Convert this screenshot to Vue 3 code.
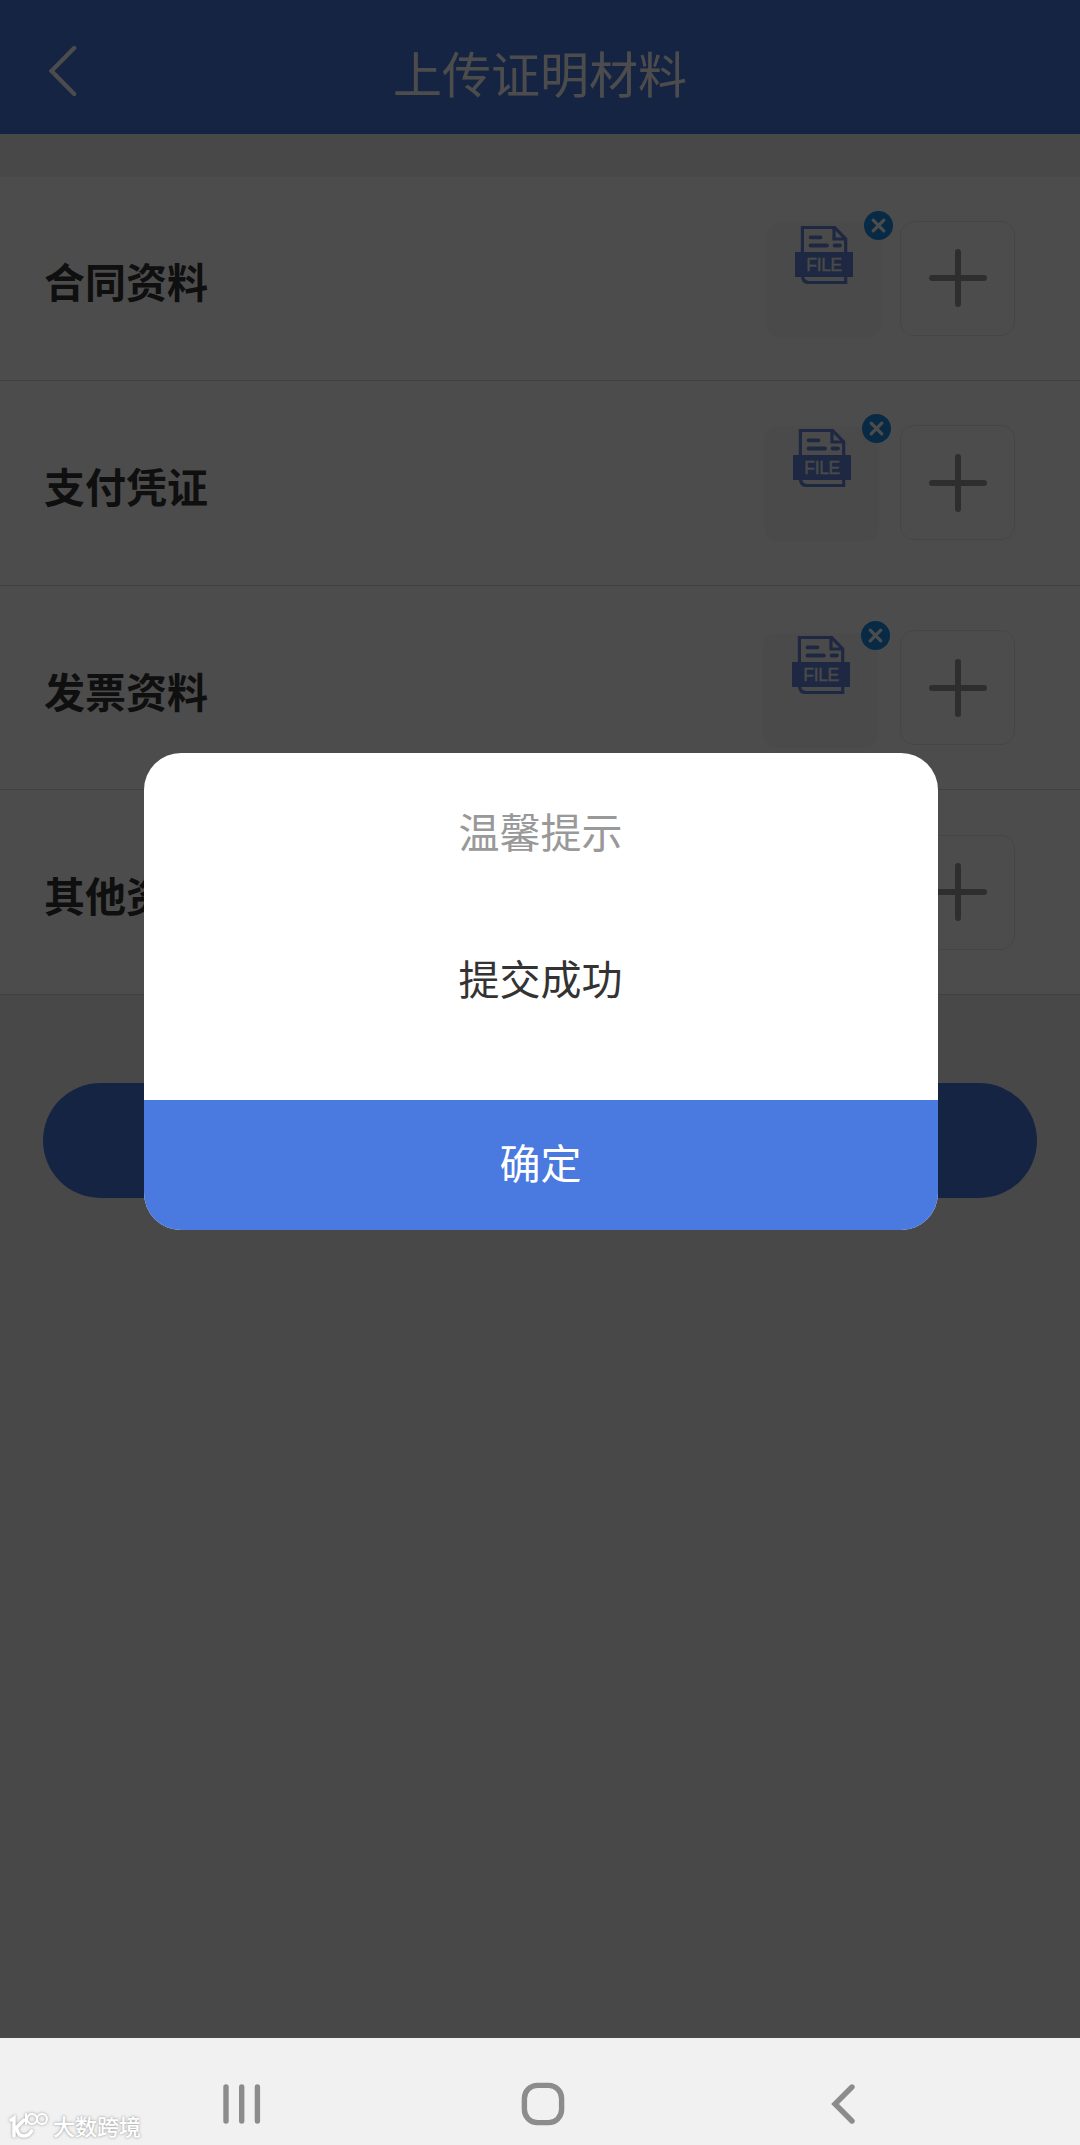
<template>
  <div class="phone">
    <div class="app">
      <header class="barre">
        <svg class="retour" viewBox="0 0 28 50" width="28" height="50">
          <path d="M25.2 2 L2.5 25 L25.2 48" />
        </svg>
        <h1 class="titre">上传证明材料</h1>
      </header>

      <main class="liste">
        <div v-for="item in materiaux" :key="item.nom" class="ligne">
          <span class="nom">{{ item.nom }}</span>
          <div class="fichiers">
            <div v-if="item.fichier" class="fichier" :class="item.classe">
              <svg class="doc" viewBox="0 0 58 58" width="58" height="58">
                <path class="trait" d="M7.4 27 V1.4 H39.5 L50.7 12.8 V27" />
                <path class="trait" d="M39 1 V13 H51" />
                <path class="trait" d="M7.4 50 Q8 56.6 14 56.6 H50.7 V50" />
                <path class="texte" d="M15.5 11.3 H25.5 M15.5 19.5 H32 M39.5 19.5 H45" />
                <rect class="bande" x="0" y="26" width="58" height="25" />
                <text x="29.3" y="44.7" text-anchor="middle" textLength="36">FILE</text>
              </svg>
              <button class="supprimer" @click="supprimer(item)">
                <svg viewBox="0 0 29 29" width="29" height="29">
                  <path d="M9.2 9.2 L19.8 19.8 M19.8 9.2 L9.2 19.8" />
                </svg>
              </button>
            </div>
            <div class="ajouter">
              <svg viewBox="0 0 58 58" width="58" height="58">
                <path d="M29 3 V55 M3 29 H55" />
              </svg>
            </div>
          </div>
        </div>
      </main>

      <button class="envoyer"></button>
    </div>

    <!-- fenêtre de confirmation -->
    <div v-if="ouvert" class="voile">
      <div class="modale">
        <p class="entete">温馨提示</p>
        <p class="message">提交成功</p>
        <button class="ok" @click="ouvert = false">确定</button>
      </div>
    </div>

    <footer class="nav">
      <svg class="recents" viewBox="0 0 38 40" width="38" height="40">
        <path d="M3 3 V37 M18.7 3 V37 M34.4 3 V37" />
      </svg>
      <svg class="accueil" viewBox="0 0 44 44" width="44" height="44">
        <rect x="3.4" y="3.4" width="37.2" height="37.2" rx="13" />
      </svg>
      <svg class="precedent" viewBox="0 0 24 40" width="24" height="40">
        <path d="M21 3 L4 20 L21 37" />
      </svg>
      <div class="filigrane">
        <svg viewBox="0 0 40 28" width="40" height="28">
          <path class="gras" d="M2 9 L5 7 V25 M15 9 L7 17 M8 18 Q9 25 15 25 Q20 25 22.5 20" />
          <path d="M17 3 V13 M38 8 A5 5 0 1 1 28 8 A5 5 0 1 1 38 8 M28 8 A5 5 0 1 1 18 8 A5 5 0 1 1 28 8" />
        </svg>
        <span>大数跨境</span>
      </div>
    </footer>
  </div>
</template>

<script setup>
import { ref } from "vue";

const ouvert = ref(true)

const materiaux = ref([
  { nom: "合同资料", fichier: true, classe: "contrat" },
  { nom: "支付凭证", fichier: true, classe: "paiement" },
  { nom: "发票资料", fichier: true, classe: "facture" },
  { nom: "其他资料", fichier: false, classe: "" },
])

function supprimer(item) {
  item.fichier = false
}
</script>

<style>
body {
  margin: 0;
}
</style>

<style scoped>
.phone {
  position: relative;
  display: flex;
  flex-direction: column;
  width: 1080px;
  height: 2145px;
  overflow: hidden;
  font-family: "Noto Sans CJK SC", sans-serif;
}

svg {
  display: block;
  fill: none;
  stroke-linecap: round;
}

button {
  border: 0;
  padding: 0;
  font-family: inherit;
}

.app {
  flex: 1;
  background-color: #f0f0f0;
}

.barre {
  display: grid;
  grid-template-columns: 90px 1fr 90px;
  align-items: center;
  height: 134px;
  background-color: #4a79e0;
}

.retour {
  margin-left: 49px;
  margin-top: 7px;
  stroke: #fff;
  stroke-width: 4.2;
}

.titre {
  margin: 10px 0 0;
  font-size: 49px;
  font-weight: 400;
  line-height: 60px;
  text-align: center;
  color: #fff;
}

.liste {
  margin-top: 42.6px;
}

.ligne {
  display: flex;
  justify-content: space-between;
  align-items: center;
  box-sizing: border-box;
  height: 204.6px;
  padding: 0 65px 0 44px;
  background-color: #fff;
  border-bottom: 1px solid #d8d8d8;
}

.nom {
  padding-top: 4px;
  font-size: 41px;
  font-weight: 700;
  line-height: 60px;
  color: #333;
}

.fichiers {
  display: flex;
}

.fichier {
  position: relative;
  width: 115px;
  height: 115px;
  border-radius: 14px;
  background-color: #f8f8f8;
}

.contrat {
  margin: 2px 19px -2px 0;
}

.paiement {
  margin: 1px 21px -1px 0;
}

.facture {
  margin: 3px 22px -3px 0;
}

.doc {
  margin: 3px 0 0 29px;
}

.doc .trait {
  stroke: #6485dc;
  stroke-width: 3.2;
  stroke-linecap: butt;
}

.doc .texte {
  stroke: #6485dc;
  stroke-width: 3.8;
}

.doc .bande {
  fill: #6485dc;
}

.doc text {
  font-family: "Liberation Sans", sans-serif;
  font-size: 17.5px;
  fill: #f4f4f4;
  stroke: #f4f4f4;
  stroke-width: 0.4;
}

.supprimer {
  position: absolute;
  top: -12px;
  right: -12px;
  width: 29px;
  height: 29px;
  border-radius: 50%;
  background-color: #1c8ee6;
}

.supprimer svg {
  stroke: #fff;
  stroke-width: 3.2;
}

.ajouter {
  display: flex;
  justify-content: center;
  align-items: center;
  box-sizing: border-box;
  width: 115px;
  height: 115px;
  border: 1px solid #e8e8e8;
  border-radius: 14px;
}

.ajouter svg {
  stroke: #999;
  stroke-width: 6;
}

.envoyer {
  display: block;
  width: 994px;
  height: 115px;
  margin: 88px auto 0;
  border-radius: 58px;
  background-color: #4a79e0;
}

.voile {
  position: absolute;
  top: 0;
  left: 0;
  right: 0;
  bottom: 107px;
  display: flex;
  justify-content: center;
  align-items: flex-start;
  background-color: rgba(0, 0, 0, 0.7);
}

.modale {
  display: flex;
  flex-direction: column;
  width: 794px;
  height: 477px;
  margin-top: 753px;
  margin-left: 1px;
  border-radius: 37px;
  overflow: hidden;
  background-color: #fff;
  font-size: 41px;
  line-height: 60px;
  text-align: center;
}

.entete {
  margin: 47px 0 0;
  color: #999;
}

.message {
  flex: 1;
  margin: 87px 0 0;
  color: #333;
}

.ok {
  height: 130px;
  padding-bottom: 8px;
  background-color: #4a79e0;
  color: #fff;
  font-size: 41px;
}

.nav {
  position: relative;
  display: flex;
  align-items: center;
  box-sizing: border-box;
  height: 107px;
  padding: 25px 225px 0 223px;
  justify-content: space-between;
  background-color: #f1f1f1;
}

.nav > svg {
  stroke: #8c8c8c;
  stroke-width: 5.4;
}

.accueil {
  margin-right: 7px;
}

.filigrane {
  position: absolute;
  left: 9px;
  bottom: 6px;
  display: flex;
  align-items: center;
  gap: 4px;
  color: #fff;
  font-size: 22px;
  font-weight: 500;
  line-height: 28px;
  text-shadow: 0 0 3px #aaa, 0 0 2px #bbb;
}

.filigrane svg {
  stroke: #fff;
  stroke-width: 2;
  filter: drop-shadow(0 0 1.5px #999);
}

.filigrane .gras {
  stroke-width: 3.4;
}
</style>
